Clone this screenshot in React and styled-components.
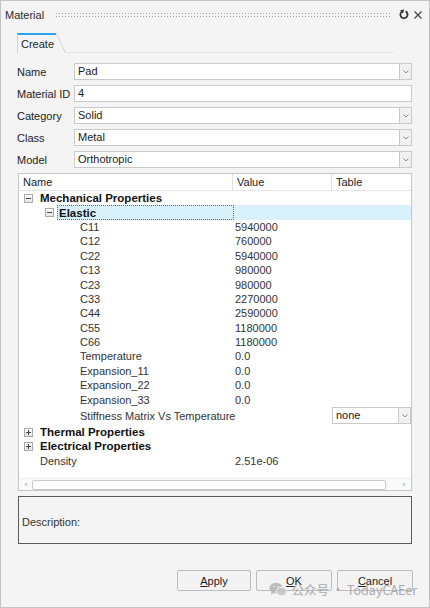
import React from "react";
import styled, { createGlobalStyle, css } from "styled-components";

const Global = createGlobalStyle`
  html, body { margin: 0; padding: 0; background: #f4f4f4; }
  * { box-sizing: border-box; }
`;

const Window = styled.div`
  position: relative;
  width: 430px;
  height: 608px;
  border: 1px solid #c4c4c4;
  background: #f4f4f4;
  display: flex;
  flex-direction: column;
  font-family: "Liberation Sans", Arial, sans-serif;
  font-size: 11px;
  color: #1e1e1e;
  overflow: hidden;
`;

const TitleBar = styled.div`
  height: 27px;
  display: flex;
  align-items: center;
  padding: 0 6px 0 4px;
`;

const Title = styled.span`
  color: #2a2a2a;
`;

const Grip = styled.div`
  flex: 1;
  height: 6px;
  margin: 0 9px 0 11px;
  background-image: radial-gradient(circle, #9c9c9c 0.75px, transparent 0.9px);
  background-size: 3px 3px;
`;

const TitleIcons = styled.div`
  display: flex;
  align-items: center;
  gap: 4px;
  color: #444;
`;

const TabRow = styled.div`
  display: flex;
  height: 20px;
  margin: 5px 35px 0 16px;
`;

const Tab = styled.div`
  position: relative;
  width: 39px;
  border-top: 2px solid #2aa4e4;
  border-left: 1px solid #d2d2d2;
  padding: 3px 0 0 3px;
  color: #222;

  &::after {
    content: "";
    position: absolute;
    top: -2px;
    bottom: 0;
    right: -1px;
    width: 1px;
    background: #d2d2d2;
    transform: skewX(24deg);
    transform-origin: top left;
  }
`;

const TabLine = styled.div`
  flex: 1;
  margin-left: 9px;
  border-bottom: 1px solid #e3e3e3;
`;

const Form = styled.div`
  display: grid;
  grid-template-columns: 56px 1fr;
  row-gap: 5px;
  align-items: center;
  margin: 10px 17px 0 16px;
`;

const Label = styled.span`
  color: #222;
`;

const Field = styled.div`
  display: flex;
  height: 17px;
  margin-left: 1px;
`;

const Input = styled.div`
  flex: 1;
  background: #fff;
  border: 1px solid #c9c9c9;
  padding: 1px 0 0 3px;
  color: #1a1a1a;
  line-height: 13px;
`;

const DropBtn = styled.div`
  width: 12px;
  border: 1px solid #c9c9c9;
  border-left: none;
  background: #f1f1f1;
  display: flex;
  align-items: center;
  justify-content: center;
`;

const Table = styled.div`
  margin: 5px 17px 0;
  height: 318px;
  border: 1px solid #c6c6c6;
  background: #fff;
  display: flex;
  flex-direction: column;
`;

const Header = styled.div`
  display: grid;
  grid-template-columns: 214px 99px 1fr;
  height: 17px;
  flex-shrink: 0;
  border-bottom: 1px solid #e6e6e6;
`;

const HeadCell = styled.div`
  padding: 2px 0 0 4px;
  border-right: 1px solid #e2e2e2;
  color: #222;

  &:last-child {
    border-right: none;
  }
`;

const Row = styled.div`
  display: flex;
  height: ${(p) => p.$h}px;
  flex-shrink: 0;
`;

const Indent = styled.div`
  width: ${(p) => p.$w}px;
  display: flex;
  align-items: center;
  padding-left: ${(p) => p.$icon}px;
`;

const RowBody = styled.div`
  flex: 1;
  display: grid;
  grid-template-columns: ${(p) => 214 - p.$indent}px 99px 1fr;
  align-items: center;
  background: ${(p) => (p.$selected ? "#d9f1fb" : "transparent")};
`;

const NameCell = styled.div`
  height: 100%;
  display: flex;
  align-items: center;
  padding-left: 1px;
  white-space: nowrap;
  color: ${(p) => (p.$bold ? "#111" : "#333")};
  font-weight: ${(p) => (p.$bold ? 700 : 400)};
  font-size: ${(p) => (p.$bold ? "11.5px" : "11px")};
  ${(p) =>
    p.$focus &&
    css`
      border: 1px dotted #666;
      margin-right: -1px;
    `}
`;

const ValueCell = styled.div`
  padding-left: 2px;
  color: #333;
`;

const TableCell = styled.div`
  display: flex;
  height: 17px;
  margin-right: 0;
`;

const Expander = styled.span`
  width: 9px;
  height: 9px;
  border: 1px solid #a9a9a9;
  background: linear-gradient(#fdfdfd, #e4e4e4);
  position: relative;

  &::before {
    content: "";
    position: absolute;
    left: 1px;
    right: 1px;
    top: 3px;
    height: 1px;
    background: #444;
  }

  ${(p) =>
    p.$plus &&
    css`
      &::after {
        content: "";
        position: absolute;
        top: 1px;
        bottom: 1px;
        left: 3px;
        width: 1px;
        background: #444;
      }
    `}
`;

const Spacer = styled.div`
  flex: 1;
`;

const HScroll = styled.div`
  height: 12px;
  display: flex;
  align-items: center;
  background: #fafafa;
  border-top: 1px solid #efefef;
  padding: 0 3px;
`;

const Arrow = styled.span`
  width: 8px;
  font-size: 8px;
  color: #888;
  text-align: center;
`;

const Thumb = styled.div`
  height: 10px;
  width: 354px;
  margin-left: 2px;
  background: #fff;
  border: 1px solid #c9c9c9;
  border-radius: 2px;
`;

const Description = styled.div`
  margin: 5px 17px 0;
  height: 48px;
  border: 1px solid #5c5c5c;
  display: flex;
  align-items: center;
  padding: 3px 0 0 3px;
  color: #333;
`;

const Footer = styled.div`
  display: flex;
  justify-content: flex-end;
  gap: 5px;
  margin: 26px 16px 0;
`;

const Button = styled.div`
  width: ${(p) => p.$w}px;
  height: 21px;
  border: 1px solid #bcbcbc;
  border-radius: 2px;
  background: #f3f3f3;
  display: flex;
  align-items: center;
  justify-content: center;
  padding-top: 1px;
  color: #222;

  u {
    text-underline-offset: 1px;
  }
`;

const Watermark = styled.div`
  position: absolute;
  right: 12px;
  bottom: 8px;
  display: flex;
  align-items: center;
  gap: 4px;
  font-family: "Noto Sans CJK SC", "Liberation Sans", sans-serif;
  font-size: 12.5px;
  color: #a3a3a3;
  opacity: 0.9;
`;

const Chevron = () => (
  <svg width="6" height="4" viewBox="0 0 6 4">
    <path d="M0.5 0.5 L3 3 L5.5 0.5" fill="none" stroke="#8a8a8a" strokeWidth="1" />
  </svg>
);

const rows = [
  { name: "Mechanical Properties", group: true, open: true, indent: 20, icon: 5 },
  { name: "Elastic", group: true, open: true, indent: 38, icon: 26, selected: true },
  { name: "C11", value: "5940000", indent: 60 },
  { name: "C12", value: "760000", indent: 60 },
  { name: "C22", value: "5940000", indent: 60 },
  { name: "C13", value: "980000", indent: 60 },
  { name: "C23", value: "980000", indent: 60 },
  { name: "C33", value: "2270000", indent: 60 },
  { name: "C44", value: "2590000", indent: 60 },
  { name: "C55", value: "1180000", indent: 60 },
  { name: "C66", value: "1180000", indent: 60 },
  { name: "Temperature", value: "0.0", indent: 60 },
  { name: "Expansion_11", value: "0.0", indent: 60 },
  { name: "Expansion_22", value: "0.0", indent: 60 },
  { name: "Expansion_33", value: "0.0", indent: 60 },
  { name: "Stiffness Matrix Vs Temperature", table: "none", indent: 60, h: 18 },
  { name: "Thermal Properties", group: true, indent: 20, icon: 5 },
  { name: "Electrical Properties", group: true, indent: 20, icon: 5 },
  { name: "Density", value: "2.51e-06", indent: 20 },
];

const fields = [
  { label: "Name", value: "Pad", drop: true },
  { label: "Material ID", value: "4" },
  { label: "Category", value: "Solid", drop: true },
  { label: "Class", value: "Metal", drop: true },
  { label: "Model", value: "Orthotropic", drop: true },
];

export default function App() {
  return (
    <>
      <Global />
      <Window>
        <TitleBar>
          <Title>Material</Title>
          <Grip />
          <TitleIcons>
            <svg width="10" height="11" viewBox="0 0 10 11">
              <path
                d="M3 2.6 A3.6 3.6 0 1 0 6.6 2.4"
                fill="none"
                stroke="#333"
                strokeWidth="1.8"
              />
              <path d="M1.2 1.2 L5.2 0.6 L4 4.4 Z" fill="#333" />
            </svg>
            <svg width="10" height="10" viewBox="0 0 10 10">
              <path d="M1.5 1.5 L8.5 8.5 M8.5 1.5 L1.5 8.5" stroke="#444" strokeWidth="1.2" />
            </svg>
          </TitleIcons>
        </TitleBar>

        <TabRow>
          <Tab>Create</Tab>
          <TabLine />
        </TabRow>

        <Form>
          {fields.map((f) => (
            <React.Fragment key={f.label}>
              <Label>{f.label}</Label>
              <Field>
                <Input>{f.value}</Input>
                {f.drop && (
                  <DropBtn>
                    <Chevron />
                  </DropBtn>
                )}
              </Field>
            </React.Fragment>
          ))}
        </Form>

        <Table>
          <Header>
            <HeadCell>Name</HeadCell>
            <HeadCell>Value</HeadCell>
            <HeadCell>Table</HeadCell>
          </Header>
          {rows.map((r) => (
            <Row key={r.name} $h={r.h || 14.4}>
              <Indent $w={r.indent} $icon={r.icon || 0}>
                {r.group && <Expander $plus={!r.open} />}
              </Indent>
              <RowBody $indent={r.indent} $selected={r.selected}>
                <NameCell $bold={r.group} $focus={r.selected}>
                  {r.name}
                </NameCell>
                <ValueCell>{r.value}</ValueCell>
                {r.table ? (
                  <TableCell>
                    <Input>{r.table}</Input>
                    <DropBtn>
                      <Chevron />
                    </DropBtn>
                  </TableCell>
                ) : (
                  <div />
                )}
              </RowBody>
            </Row>
          ))}
          <Spacer />
          <HScroll>
            <Arrow>‹</Arrow>
            <Thumb />
            <Spacer />
            <Arrow>›</Arrow>
          </HScroll>
        </Table>

        <Description>Description:</Description>

        <Footer>
          <Button $w={74}>
            <span>
              <u>A</u>pply
            </span>
          </Button>
          <Button $w={76}>
            <span>
              <u>O</u>K
            </span>
          </Button>
          <Button $w={76}>
            <span>
              <u>C</u>ancel
            </span>
          </Button>
        </Footer>

        <Watermark>
          <svg width="18" height="15" viewBox="0 0 18 15">
            <ellipse cx="7" cy="6" rx="6.5" ry="5.3" fill="#b5b5b5" />
            <path d="M2.5 10 L2 13 L5 11 Z" fill="#b5b5b5" />
            <ellipse cx="12.5" cy="9.5" rx="5.2" ry="4.3" fill="#c4c4c4" stroke="#f4f4f4" strokeWidth="1" />
            <circle cx="5" cy="4.5" r="0.8" fill="#f4f4f4" />
            <circle cx="9" cy="4.5" r="0.8" fill="#f4f4f4" />
          </svg>
          <span>公众号 · TodayCAEer</span>
        </Watermark>
      </Window>
    </>
  );
}
